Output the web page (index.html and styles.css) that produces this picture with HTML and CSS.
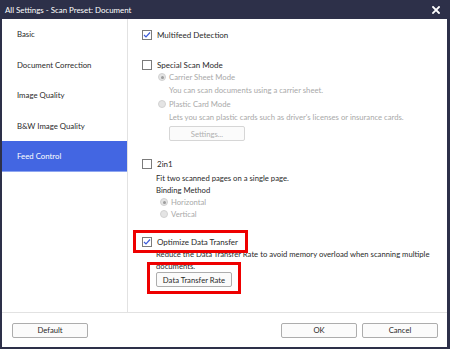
FILE: index.html
```html
<!DOCTYPE html>
<html lang="en">
<head>
    <meta charset="UTF-8">
    <title>All Settings - Scan Preset: Document</title>
    <link rel="stylesheet" href="styles.css">
</head>
<body>
<div class="window">
    <header class="titlebar">
        <span class="title">All Settings - Scan Preset: Document</span>
        <svg class="close" width="8" height="8" viewBox="0 0 8 8">
            <path d="M1 1 L7 7 M7 1 L1 7" stroke="#fff" stroke-width="1.8" stroke-linecap="square"/>
        </svg>
    </header>

    <div class="main">
        <nav class="sidebar">
            <div class="nav-item">Basic</div>
            <div class="nav-item">Document Correction</div>
            <div class="nav-item">Image Quality</div>
            <div class="nav-item">B&amp;W Image Quality</div>
            <div class="nav-item active">Feed Control</div>
        </nav>

        <section class="content">
            <div class="row label">
                <span class="checkbox checked">
                    <svg width="8" height="8" viewBox="0 0 8 8"><path d="M1 4 L3 6 L7 1.5" fill="none" stroke="#3b5bd9" stroke-width="1.2"/></svg>
                </span>
                <span>Multifeed Detection</span>
            </div>

            <div class="row label special">
                <span class="checkbox"></span>
                <span>Special Scan Mode</span>
            </div>
            <div class="sub disabled">
                <div class="row radio-row">
                    <span class="radio selected"></span>
                    <span>Carrier Sheet Mode</span>
                </div>
                <div class="desc desc-carrier">You can scan documents using a carrier sheet.</div>
                <div class="row radio-row plastic">
                    <span class="radio"></span>
                    <span>Plastic Card Mode</span>
                </div>
                <div class="desc desc-plastic">Lets you scan plastic cards such as driver's licenses or insurance cards.</div>
                <button class="btn btn-settings" disabled>Settings...</button>
            </div>

            <div class="row label twoin1">
                <span class="checkbox"></span>
                <span>2in1</span>
            </div>
            <div class="indent">
                <div class="desc fit">Fit two scanned pages on a single page.</div>
                <div class="desc">Binding Method</div>
                <div class="disabled">
                    <div class="row radio-row small-indent">
                        <span class="radio selected"></span>
                        <span>Horizontal</span>
                    </div>
                    <div class="row radio-row small-indent">
                        <span class="radio"></span>
                        <span>Vertical</span>
                    </div>
                </div>
            </div>

            <div class="row label optimize">
                <span class="checkbox checked">
                    <svg width="8" height="8" viewBox="0 0 8 8"><path d="M1 4 L3 6 L7 1.5" fill="none" stroke="#3b5bd9" stroke-width="1.2"/></svg>
                </span>
                <span>Optimize Data Transfer</span>
                <span class="mark mark-optimize"></span>
            </div>
            <div class="indent">
                <div class="desc wrap">Reduce the Data Transfer Rate to avoid memory overload when scanning multiple documents.</div>
                <div class="btn-wrap">
                    <button class="btn">Data Transfer Rate</button>
                    <span class="mark mark-rate"></span>
                </div>
            </div>
        </section>
    </div>

    <footer class="footer">
        <button class="btn">Default</button>
        <div class="footer-right">
            <button class="btn">OK</button>
            <button class="btn">Cancel</button>
        </div>
    </footer>
</div>
</body>
</html>
```

FILE: styles.css
```css
body {
    margin: 0;
    font-family: Lato, "Noto Sans", sans-serif;
    font-size: 7.7px;
    color: #2a2a2a;
    background-color: #ffffff;
}

.window {
    width: 450px;
    height: 349px;
    box-sizing: border-box;
    border: solid #2d3049;
    border-width: 0 3px 2px 2px;
    display: flex;
    flex-direction: column;
    background-color: #ffffff;
}

.titlebar {
    height: 19px;
    flex-shrink: 0;
    margin: 0 -3px 0 -2px;
    background-color: #2d3049;
    color: #ffffff;
    display: flex;
    align-items: center;
    justify-content: space-between;
    padding: 0 10px 0 5px;
}

.title {
    font-size: 7.9px;
}

.main {
    height: 293px;
    display: flex;
}

.sidebar {
    width: 125px;
    border-right: 1px solid #e2e2e2;
    flex-shrink: 0;
}

.nav-item {
    height: 30.5px;
    line-height: 30.5px;
    padding-left: 15px;
    font-size: 7.8px;
}

.nav-item.active {
    background-color: #4366e2;
    color: #ffffff;
    box-shadow: inset 0 -1px 0 #8ea6f0;
}

.content {
    flex: 1;
    padding: 10px 0 0 14px;
}

.row {
    display: flex;
    align-items: center;
    gap: 5px;
    height: 12px;
    position: relative;
}

.label {
    font-size: 8px;
}

.checkbox {
    width: 10px;
    height: 10px;
    box-sizing: border-box;
    border: 1px solid #7b7b7b;
    background-color: #ffffff;
    display: flex;
    align-items: center;
    justify-content: center;
}

.special {
    margin-top: 18px;
}

.sub {
    padding-left: 16px;
}

.disabled {
    color: #a9a9a9;
}

.radio-row {
    gap: 3px;
}

.radio {
    width: 8px;
    height: 8px;
    box-sizing: border-box;
    border-radius: 50%;
    border: 1px solid #d2d2d2;
    background-color: #e4e4e4;
    position: relative;
}

.radio.selected::after {
    content: "";
    position: absolute;
    left: 1.5px;
    top: 1.5px;
    width: 3px;
    height: 3px;
    border-radius: 50%;
    background-color: #9d9d9d;
}

.desc {
    height: 12px;
    line-height: 12px;
}

.desc-carrier,
.desc-plastic {
    margin-top: 1px;
    padding-left: 11px;
}

.plastic {
    margin-top: 2px;
}

.btn {
    font-family: Lato, "Noto Sans", sans-serif;
    font-size: 7.7px;
    width: 76px;
    height: 15px;
    padding: 0;
    color: #2a2a2a;
    background-color: #fbfbfb;
    border: 1px solid #adadad;
    border-radius: 2px;
}

.btn-settings {
    margin: 3px 0 0 11px;
    color: #b0b0b0;
    border-color: #d6d6d6;
}

.twoin1 {
    margin-top: 17px;
}

.indent {
    padding-left: 14px;
}

.fit {
    margin-top: 2px;
}

.small-indent {
    padding-left: 4px;
}

.optimize {
    margin-top: 16px;
}

.wrap {
    height: auto;
    width: 285px;
}

.btn-wrap {
    position: relative;
    width: 76px;
}

.mark {
    position: absolute;
    border: 3px solid #ee0000;
    box-sizing: border-box;
}

.mark-optimize {
    left: -9px;
    top: -6px;
    width: 115px;
    height: 23px;
}

.mark-rate {
    left: -9px;
    top: -10px;
    width: 94px;
    height: 32px;
}

.footer {
    height: 35px;
    box-sizing: border-box;
    border-top: 1px solid #e2e2e2;
    display: flex;
    align-items: center;
    justify-content: space-between;
    padding: 0 9px 0 10px;
}

.footer-right {
    display: flex;
    gap: 5px;
}
```
